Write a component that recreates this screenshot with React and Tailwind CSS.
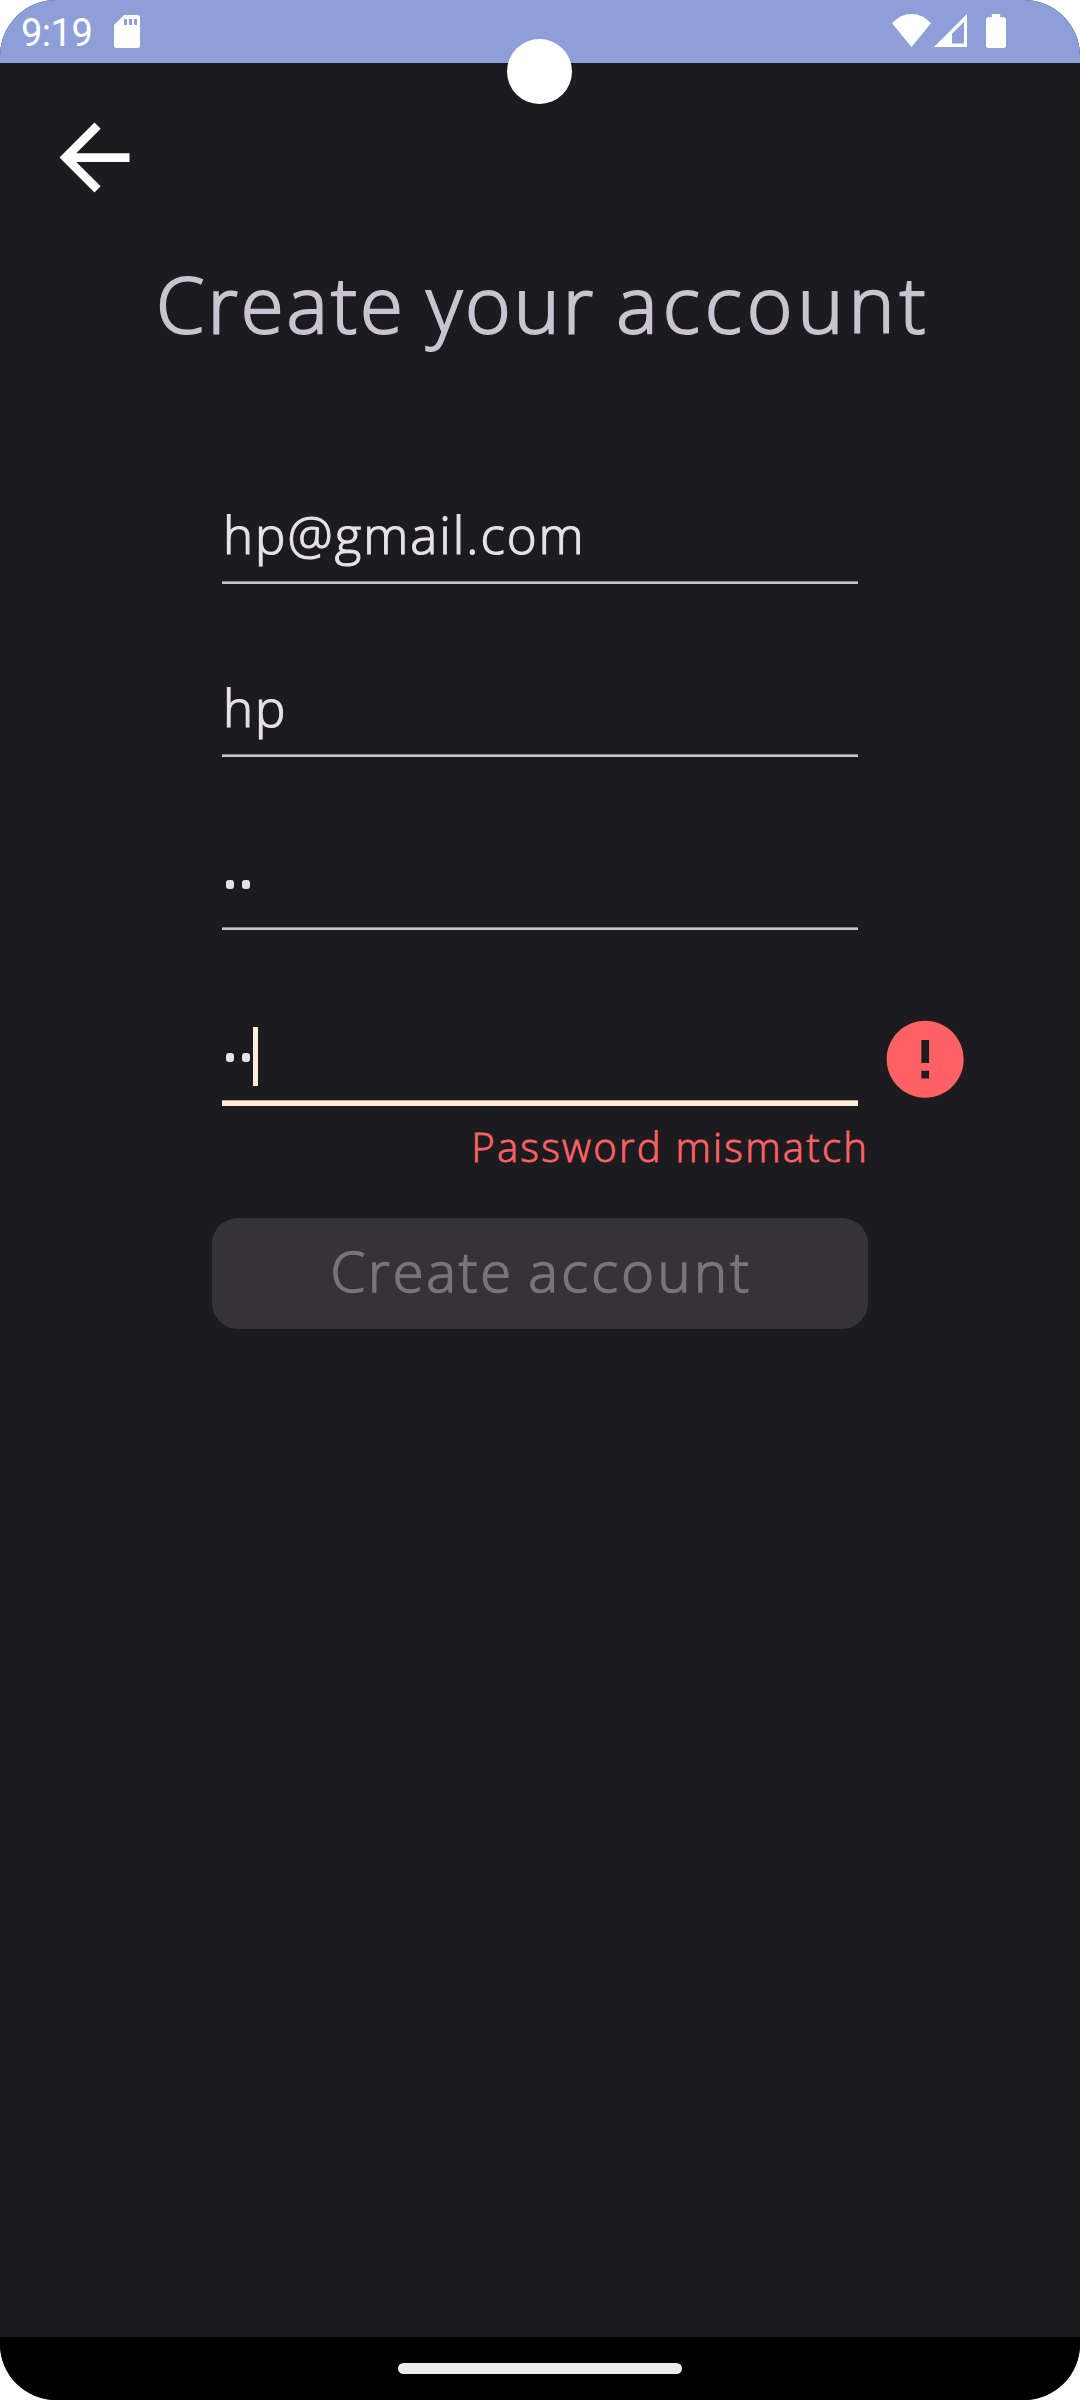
import React from "react";

function StatusBar() {
  return (
    <header className="flex h-[63px] shrink-0 items-start bg-[#8e9fd8] pl-[21px] text-white">
      <span className="mt-[3px] h-[60px] w-[93px] font-['Roboto',sans-serif] text-[38px] leading-[60px] font-normal tracking-[-0.5px] whitespace-nowrap">
        9:19
      </span>
      <svg className="mt-[15px] h-[33px] w-[26px]" viewBox="0 0 26 33">
        <path
          fill="currentColor"
          fillRule="evenodd"
          d="M10 0H23.5Q26 0 26 2.5V30.5Q26 33 23.5 33H2.5Q0 33 0 30.5V10ZM10 4V10H13V4ZM15 4V10H18V4ZM20 4V10H23V4Z"
        />
      </svg>
      <div className="mt-[14px] mr-[74px] ml-auto flex">
        <svg className="h-[34px] w-[39px]" viewBox="0 0 39 34">
          <path fill="currentColor" d="M0 9.2Q8.5 0 19.5 0T39 9.2L19.5 33Z" />
        </svg>
        <svg className="ml-[3px] h-[34px] w-[33px]" viewBox="0 0 33 34">
          <path fill="currentColor" fillRule="evenodd" d="M33 0V33H0ZM30 8L18 19.8V29.5H30Z" />
        </svg>
        <svg className="ml-[19px] h-[34px] w-[20px]" viewBox="0 0 20 34">
          <path
            fill="currentColor"
            d="M5.8 0H14.2V3.3H17.8Q20 3.3 20 5.5V31.8Q20 34 17.8 34H2.2Q0 34 0 31.8V5.5Q0 3.3 2.2 3.3H5.8Z"
          />
        </svg>
      </div>
    </header>
  );
}

function Dots() {
  return (
    <span className="mt-3 flex gap-2">
      <span className="h-[9px] w-2 rounded-[3px] bg-[#e6e1e5]" />
      <span className="h-[9px] w-2 rounded-[3px] bg-[#e6e1e5]" />
    </span>
  );
}

function Value({ children }) {
  return (
    <span className="mt-[3px] -ml-[3px] text-[51px] leading-[90px] tracking-[2px] text-[#e6e1e5] [-webkit-text-stroke:1.2px]">
      {children}
    </span>
  );
}

function Field({ children }) {
  return (
    <div className="mb-[73px] flex h-[100px] flex-col">
      <div className="flex h-[97px] items-center pl-1">{children}</div>
      <div className="h-px bg-[#8c8792]" />
      <div className="h-0.5 bg-[#cac4d0]" />
    </div>
  );
}

export default function App() {
  return (
    <div className="h-[2400px] w-[1080px] bg-white font-['Open_Sans',sans-serif] font-light">
      <div className="relative flex h-full flex-col overflow-hidden rounded-[56px] bg-[#1c1b20]">
        <StatusBar />
        <div className="absolute top-[39px] left-[507px] size-[65px] rounded-full bg-white" />

        <button className="mt-[42px] ml-[42px] size-[105px] shrink-0 text-white" aria-label="Back">
          <svg viewBox="0 0 24 24" className="size-full" fill="currentColor">
            <path d="M20 11H7.83l5.59-5.59L12 4l-8 8 8 8 1.41-1.41L7.83 13H20v-2z" />
          </svg>
        </button>

        <h1 className="mt-[43px] ml-[156px] h-[100px] shrink-0 text-[78px] leading-[100px] tracking-[3px] [word-spacing:-3px] whitespace-nowrap text-[#cac4d0] [-webkit-text-stroke:2px]">
          Create your <span className="tracking-[5px]">account</span>
        </h1>

        <form className="mt-[131px] ml-[222px] w-[636px] shrink-0">
          <Field>
            <Value>hp@gmail.com</Value>
          </Field>
          <Field>
            <Value>hp</Value>
          </Field>
          <Field>
            <Dots />
          </Field>

          <div className="relative h-[103px]">
            <div className="flex h-[97px] items-center pl-1">
              <Dots />
              <span className="mt-[10px] ml-[3px] h-[59px] w-[5px] bg-[#ffeddc]" />
            </div>
            <div className="h-px bg-[#b5a79c]" />
            <div className="h-[5px] bg-[#ffeddc]" />
            <svg
              viewBox="0 0 24 24"
              className="absolute top-[9.8px] left-[656.8px] size-[92.4px]"
              fill="#ff6265"
            >
              <path d="M12 2C6.48 2 2 6.48 2 12s4.48 10 10 10 10-4.48 10-10S17.52 2 12 2zm1 15h-2v-2h2v2zm0-4h-2V7h2v6z" />
            </svg>
          </div>

          <p className="mt-[10px] -mr-[11px] h-[60px] text-right text-[40px] leading-[61px] tracking-[2.25px] whitespace-nowrap text-[#ff6265] [-webkit-text-stroke:0.8px]">
            Password mismatch
          </p>

          <button
            type="button"
            disabled
            className="mt-[42px] -ml-2.5 block h-[111px] w-[656px] rounded-[26px] bg-[#353338] pb-[6px] pl-[3px] text-[56px] leading-[105px] tracking-[2.8px] [word-spacing:-3px] whitespace-nowrap text-[#787579] [-webkit-text-stroke:1.5px]"
          >
            Create <span className="tracking-[3.4px]">account</span>
          </button>
        </form>

        <footer className="mt-auto flex h-[63px] shrink-0 items-center justify-center bg-black">
          <div className="h-[11px] w-[284px] rounded-full bg-[#ebebeb]" />
        </footer>
      </div>
    </div>
  );
}
